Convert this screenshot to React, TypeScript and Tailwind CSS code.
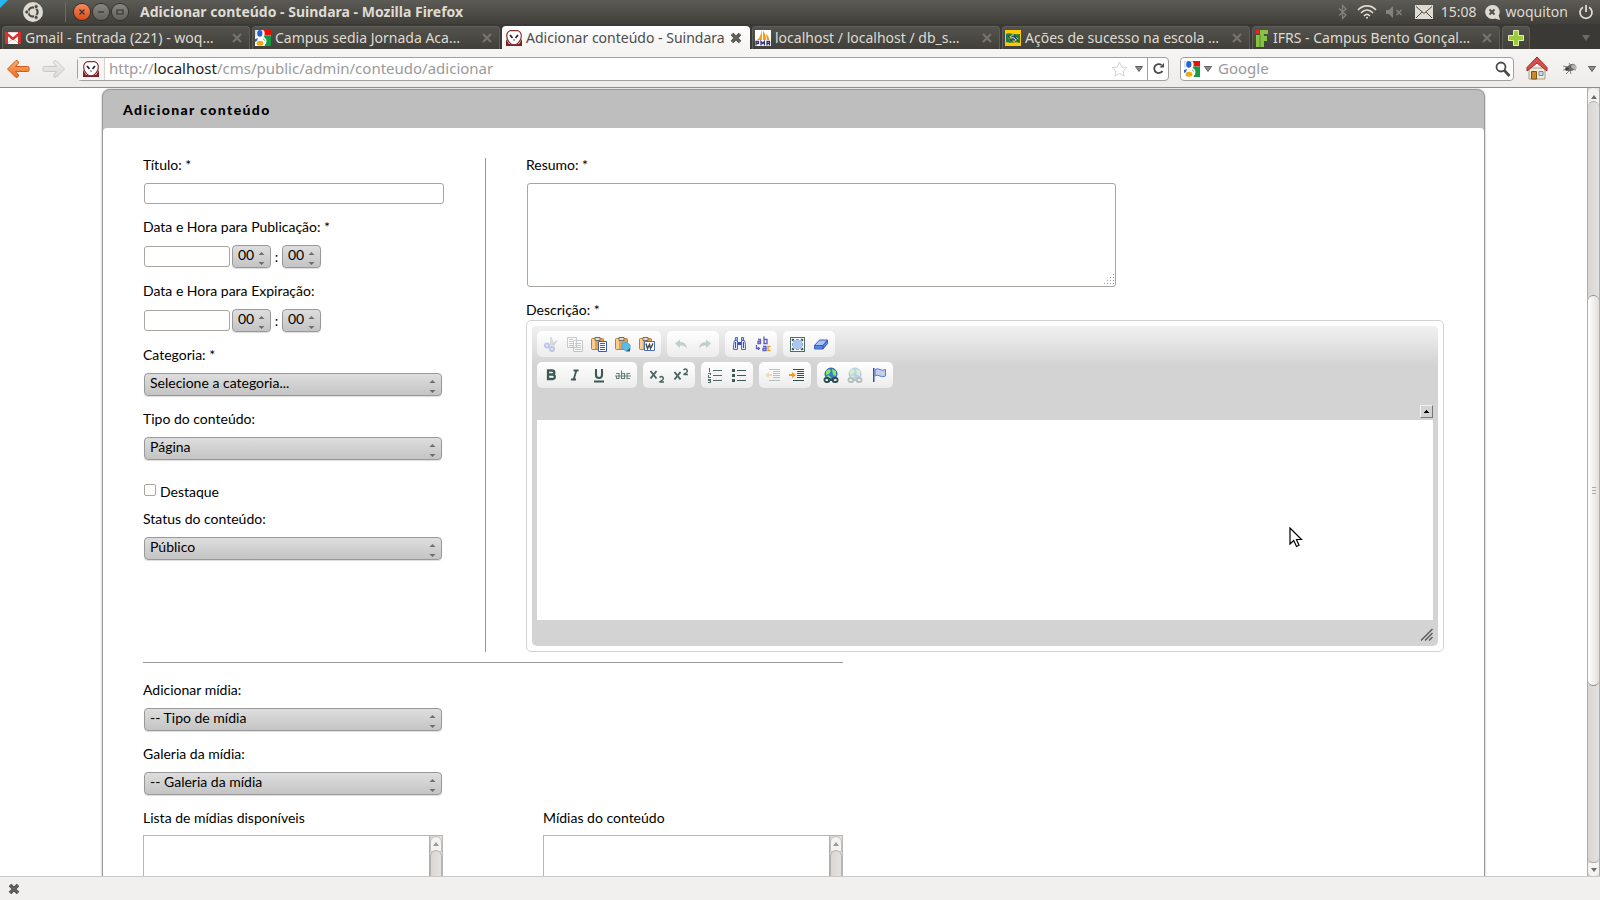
import type { ReactNode } from 'react';
import clsx from 'clsx';

const chromeFont = 'font-[Noto_Sans,sans-serif]';
const pageFont = 'font-[Lato,sans-serif]';

/* ---------- favicons ---------- */

function GmailIcon() {
  return (
    <svg width="16" height="16" viewBox="0 0 16 16" className="shrink-0">
      <rect y="2" width="16" height="12" rx="1" fill="#fff" />
      <path d="M0 2h3v12H0zM13 2h3v12h-3z" fill="#d3342b" />
      <path d="M1 3l7 6 7-6" fill="none" stroke="#d3342b" strokeWidth="2.4" />
      <path d="M3 13l4-4M13 13L9 9" stroke="#e9b3ae" strokeWidth="1" />
      <path d="M3 2.5h10" stroke="#f2d5d2" />
    </svg>
  );
}

function GoogleIcon() {
  return (
    <svg width="16" height="16" viewBox="0 0 16 16" className="shrink-0">
      <rect width="16" height="16" fill="#fff" />
      <path d="M7.500 0H16v5.500H9.500z" fill="#e8120c" />
      <path d="M9 5.500h7V16h-6.500c1.500-3 1-5-1.500-7z" fill="#159a45" />
      <path d="M0 0h2.500C1 1.500 1 4 2 6L0 7z" fill="#cfe0f6" />
      <ellipse cx="4.800" cy="3.400" rx="2.600" ry="3.300" fill="#2a62c9" />
      <path d="M0 9l3-1-1 3-2 1z" fill="#2a62c9" />
      <path d="M8 .5c1.500 2 1.500 4-.5 6.500 3 1.500 4 4 2.500 7" stroke="#fff" strokeWidth="1.400" fill="none" />
      <ellipse cx="5" cy="13.200" rx="3.400" ry="2.500" fill="#f2a90c" />
    </svg>
  );
}

function OwlIcon() {
  return (
    <svg width="16" height="16" viewBox="0 0 16 16" className="shrink-0">
      <rect width="16" height="16" rx="1" fill="#fff" />
      <path d="M0 9v7h16V9l-3 5H3z" fill="#7d2228" />
      <path
        d="M4 .7h8q3.300 1.500 3.300 5c0 4-2.300 7-5 8.800H5.700C3 12.700 .7 9.700 .7 5.700Q.7 2.200 4 .7z"
        fill="#fff"
        stroke="#8d3338"
        strokeWidth="1.200"
      />
      <path d="M4 5l2.500 3M12 5L9.500 8" stroke="#222" strokeWidth="1.700" />
      <path d="M7 9.500h2l-1 1.800z" fill="#333" />
    </svg>
  );
}

function PmaIcon() {
  return (
    <svg width="16" height="16" viewBox="0 0 16 16" className="shrink-0">
      <rect width="16" height="16" fill="#fff" />
      <path d="M7 0v10H2c3-2 4-6 5-10zM8 1c2 2 3 5 3 9H8zM11 4c2 1 3 4 3.500 6H12z" fill="#f89c0e" />
      <path d="M1 15.500v-4h2.500v2H1M6 15.500v-4l1.700 2 1.700-2v4M12 15.500v-4h2.500v4M12 13.500h2.500" fill="none" stroke="#33336b" strokeWidth="1.300" />
    </svg>
  );
}

function BrazilIcon() {
  return (
    <svg width="16" height="16" viewBox="0 0 16 16" className="shrink-0">
      <rect width="16" height="16" fill="#fdca00" />
      <path d="M1 4c3-2 6 1 14 0v9C10 11 6 14 1 12z" fill="#1c7c4c" />
      <path d="M3 8l5-4 5.500 5L9 12z" fill="#d9c52b" />
      <circle cx="8.500" cy="8" r="2.600" fill="#2a4e9a" />
      <path d="M6 8c2-1 4 0 5 2" stroke="#fff" fill="none" strokeWidth=".8" />
      <path d="M9 5l4 6M3 6l4 5" stroke="#113c2a" />
    </svg>
  );
}

function IfrsIcon() {
  return (
    <svg width="14" height="18" viewBox="0 0 14 18" className="shrink-0">
      <path d="M5 1h8v4H9v2h3v5H9v6H1V6h4z" fill="#86c440" />
      <path d="M5 6v12" stroke="#4c4b46" strokeWidth=".6" />
      <circle cx="2.500" cy="2.700" r="2.400" fill="#e8202a" />
    </svg>
  );
}

/* ---------- window chrome ---------- */

function WindowButton({ label, orange, children }: { label: string; orange?: boolean; children: ReactNode }) {
  return (
    <button
      aria-label={label}
      className={clsx(
        'flex h-4 w-4 items-center justify-center rounded-full ring-1 ring-[#33322e]',
        orange ? 'bg-linear-to-b from-[#f7895c] to-[#dd4814]' : 'bg-linear-to-b from-[#8a8881] to-[#62615b]',
      )}
    >
      <svg width="8" height="8" viewBox="0 0 8 8" fill="none" stroke="#33322e" strokeWidth="1.200">
        {children}
      </svg>
    </button>
  );
}

function TitleBar() {
  return (
    <header className="relative flex h-6 shrink-0 items-center bg-linear-to-b from-[#5c5b56] to-[#403f3a] pl-[23px] pr-1.5 text-sm text-[#dfdbd2]">
      <svg width="8" height="8" className="absolute left-0 top-0">
        <path d="M0 0h8L0 8z" fill="#27b8f0" />
      </svg>
      <svg width="20" height="20" viewBox="0 0 20 20">
        <circle cx="10" cy="10" r="10" fill="#dfdbd2" />
        <circle cx="10" cy="10" r="4.600" fill="none" stroke="#4b4a45" strokeWidth="2.200" />
        <g stroke="#dfdbd2" strokeWidth="1.200">
          <path d="M10 10L3 10M10 10l4-7M10 10l4 7" />
        </g>
        <circle cx="10" cy="10" r="3" fill="#dfdbd2" />
        <g fill="#4b4a45" stroke="#dfdbd2" strokeWidth=".8">
          <circle cx="3.800" cy="10" r="2" />
          <circle cx="13.200" cy="4.600" r="2" />
          <circle cx="13.200" cy="15.400" r="2" />
        </g>
      </svg>
      <div className="ml-[22px] h-5 w-px bg-[#6b6a64]" />
      <div className="ml-2 flex gap-[3px]">
        <WindowButton label="Fechar" orange>
          <path d="M1.500 1.500l5 5M6.500 1.500l-5 5" />
        </WindowButton>
        <WindowButton label="Minimizar">
          <path d="M1 4h6" />
        </WindowButton>
        <WindowButton label="Maximizar">
          <path d="M1 2h6v4H1z" />
        </WindowButton>
      </div>
      <h1 className="ml-3 font-bold">Adicionar conteúdo - Suindara - Mozilla Firefox</h1>
      <div className="ml-auto flex items-center">
        <svg width="10" height="16" viewBox="0 0 10 16" fill="none" stroke="#85837c" strokeWidth="1.300">
          <path d="M1 4.500l7 6.500-3.500 3.500V1.500L8 5 1 11.500" />
        </svg>
        <svg width="20" height="16" viewBox="0 0 20 16" fill="none" stroke="#dfdbd2" strokeWidth="1.600" className="ml-[9px]">
          <path d="M1 6c5-5.500 13-5.500 18 0M4 9c3.500-4 8.500-4 12 0M7 12c2-2.200 4-2.200 6 0" />
          <circle cx="10" cy="13.800" r="1" fill="#dfdbd2" stroke="none" />
        </svg>
        <svg width="18" height="16" viewBox="0 0 18 16" className="ml-2">
          <path d="M1 6h3l4-4v12l-4-4H1z" fill="#85837c" />
          <path d="M11.500 6l5 5M16.500 6l-5 5" stroke="#85837c" strokeWidth="1.400" />
        </svg>
        <svg width="18" height="14" viewBox="0 0 18 14" className="ml-3">
          <rect width="18" height="14" fill="#dfdbd2" />
          <path d="M1 1.500l8 7 8-7M1 13l6-6M17 13l-6-6" stroke="#4b4a45" fill="none" />
        </svg>
        <span className="ml-2">15:08</span>
        <svg width="17" height="17" viewBox="0 0 17 17" className="ml-2">
          <path d="M8 1a7 7 0 1 0 3 13.400L16 16l-1.300-4.500A7 7 0 0 0 8 1z" fill="#dfdbd2" />
          <path d="M5.500 5.500l5 5M10.500 5.500l-5 5" stroke="#4b4a45" strokeWidth="1.800" />
        </svg>
        <span className="ml-1">woquiton</span>
        <svg width="16" height="16" viewBox="0 0 16 16" fill="none" stroke="#dfdbd2" strokeWidth="1.800" className="ml-2.5">
          <path d="M5 3.200a6 6 0 1 0 6 0M8 1v7" />
        </svg>
      </div>
    </header>
  );
}

function CloseButton({ label, strong }: { label: string; strong?: boolean }) {
  return (
    <button aria-label={label} className="shrink-0">
      <svg width="12" height="12" viewBox="0 0 12 12" fill="none">
        <path d="M2 2l8 8M10 2l-8 8" stroke={strong ? '#4b4a46' : '#75736c'} strokeWidth={strong ? 3.6 : 2.2} />
        {strong && <path d="M2 2l8 8M10 2l-8 8" stroke="#6c6b66" strokeWidth="1.400" />}
      </svg>
    </button>
  );
}

const tabs = [
  { title: 'Gmail - Entrada (221) - woq…', icon: <GmailIcon /> },
  { title: 'Campus sedia Jornada Aca…', icon: <GoogleIcon /> },
  { title: 'Adicionar conteúdo - Suindara', icon: <OwlIcon />, active: true },
  { title: 'localhost / localhost / db_s…', icon: <PmaIcon /> },
  { title: 'Ações de sucesso na escola …', icon: <BrazilIcon /> },
  { title: 'IFRS - Campus Bento Gonçal…', icon: <IfrsIcon /> },
];

function TabBar() {
  return (
    <nav className="flex h-[25px] shrink-0 items-end gap-0.5 bg-[#3a3935] pl-0.5">
      {tabs.map((tab) => (
        <div
          key={tab.title}
          className={clsx(
            'flex h-[23px] min-w-0 max-w-[248px] flex-1 items-center justify-between rounded-t text-sm',
            tab.active
              ? 'bg-linear-to-b from-white to-[#f4f3f2] pl-1 pr-2 text-[#4c4c4c]'
              : 'border border-b-0 border-[#5f5e58] bg-linear-to-b from-[#53524d] to-[#403f3a] pl-0.5 pr-1.5 text-[#dfdbd2]',
          )}
        >
          <button className="flex min-w-0 items-center gap-1 whitespace-nowrap">
            {tab.icon}
            <span>{tab.title}</span>
          </button>
          <CloseButton label="Fechar aba" strong={tab.active} />
        </div>
      ))}
      <button
        aria-label="Nova aba"
        className="flex h-[23px] w-7 items-center justify-center rounded-t border border-b-0 border-[#5f5e58] bg-linear-to-b from-[#53524d] to-[#403f3a]"
      >
        <svg width="16" height="16" viewBox="0 0 16 16">
          <path d="M5.500 .5h5v5h5v5h-5v5h-5v-5h-5v-5h5z" fill="#9ccb3b" stroke="#e4f3b4" />
        </svg>
      </button>
      <button aria-label="Listar abas" className="mb-2 ml-auto mr-2.5">
        <svg width="8" height="6" viewBox="0 0 8 6">
          <path d="M0 0h8L4 6z" fill="#6b6a64" />
        </svg>
      </button>
    </nav>
  );
}

function DropArrow() {
  return (
    <svg width="8" height="6" viewBox="0 0 8 6" className="shrink-0">
      <path d="M.5 .5h7L4 5.500z" fill="#8f8d89" stroke="#62605c" />
    </svg>
  );
}

function NavArrow({ back }: { back?: boolean }) {
  return (
    <svg width="24" height="20" viewBox="0 0 24 20" className={back ? '' : '-scale-x-100'}>
      <defs>
        <linearGradient id={back ? 'ar' : 'af'} x2="0" y2="1">
          <stop stopColor={back ? '#fbb26a' : '#ececea'} />
          <stop offset="1" stopColor={back ? '#ee6b23' : '#dad9d6'} />
        </linearGradient>
      </defs>
      <path
        d="M1.500 10l8.500-8.500q2.500 0 2.500 2.500L9.500 7.500h12q1.500 0 1.500 1v3q0 1-1.500 1h-12l3 3.500q0 2.500-2.500 2.500z"
        fill={back ? 'url(#ar)' : 'url(#af)'}
        stroke={back ? '#cf5a1c' : '#c9c8c4'}
        strokeLinejoin="round"
      />
    </svg>
  );
}

function NavBar() {
  return (
    <div className="flex h-[39px] shrink-0 items-center border-b border-[#8f8d8a] bg-linear-to-b from-[#f6f5f4] to-[#edecea] pl-1.5 pr-1 pt-px text-[15px]">
      <button aria-label="Voltar">
        <NavArrow back />
      </button>
      <button aria-label="Avançar" className="ml-3">
        <NavArrow />
      </button>
      <div className="ml-[11px] flex h-6 flex-1 items-center rounded border border-[#a3a09c] bg-white">
        <div className="flex h-full w-[27px] items-center justify-center border-r border-[#d5d3d0] bg-[#f6f5f4]">
          <OwlIcon />
        </div>
        <div className="relative flex h-full flex-1 items-center pl-1">
          <input aria-label="Endereço" className="absolute inset-0 bg-transparent outline-none" />
          <span className="text-[#9a9a9a]">
            http://<span className="text-[#1e1e1e]">localhost</span>/cms/public/admin/conteudo/adicionar
          </span>
        </div>
        <button aria-label="Favoritar" className="mr-[7px]">
          <svg width="17" height="16" viewBox="0 0 17 16">
            <path d="M8.500 1l2.200 5 5.300.5-4 3.500 1.200 5.200-4.700-2.800-4.700 2.800L5 10 1 6.500 6.300 6z" fill="#fff" stroke="#d5d3d0" />
          </svg>
        </button>
        <DropArrow />
        <button aria-label="Recarregar" className="ml-1 flex h-full w-[21px] items-center justify-center border-l border-[#a3a09c]">
          <svg width="13" height="13" viewBox="0 0 13 13" fill="none" stroke="#4a4a48" strokeWidth="1.800">
            <path d="M9.500 3a4.500 4.500 0 1 0 1 6" />
            <path d="M7.500 5.500h4.500V1z" fill="#4a4a48" stroke="none" />
          </svg>
        </button>
      </div>
      <div className="ml-[11px] flex h-6 w-[334px] items-center rounded border border-[#a3a09c] bg-white pl-[3px] pr-0.5">
        <GoogleIcon />
        <span className="ml-1">
          <DropArrow />
        </span>
        <input aria-label="Pesquisar" placeholder="Google" className="ml-1.5 min-w-0 flex-1 outline-none placeholder:text-[#9a9a9a]" />
        <svg width="16" height="16" viewBox="0 0 16 16" fill="none" stroke="#4a4a48">
          <circle cx="6" cy="6" r="4.500" strokeWidth="1.800" />
          <path d="M9 9l5.500 6" strokeWidth="2.600" />
        </svg>
      </div>
      <button aria-label="Página inicial" className="ml-3">
        <svg width="22" height="26" viewBox="0 0 22 26">
          <path d="M3 12h16v11H3z" fill="#f1ecd9" stroke="#a39f8d" />
          <path d="M11 1L1 11.500V15l10-8 10 8v-3.500z" fill="#d5504d" stroke="#a32a28" strokeLinejoin="round" />
          <path d="M5.500 15.500h5V23h-5z" fill="#c98b2c" stroke="#7d5414" />
          <path d="M13 15.500h4v4h-4z" fill="#c9dbee" stroke="#75879b" />
        </svg>
      </button>
      <button aria-label="Firebug" className="ml-3.5">
        <svg width="16" height="16" viewBox="0 0 16 16">
          <path d="M1 5l5 1M1 9l4-1M4 13l3-3M9 13l-1-3M7 2l2 3M14 9l-4-1" stroke="#777" strokeWidth=".9" />
          <ellipse cx="9.500" cy="6.500" rx="4.500" ry="3.200" fill="#6b6965" transform="rotate(-25 9.500 6.500)" />
          <ellipse cx="12" cy="6" rx="3" ry="2" fill="#b5b3ae" transform="rotate(30 12 6)" />
          <circle cx="5" cy="8" r="2" fill="#444" />
        </svg>
      </button>
      <span className="ml-2.5 flex">
        <DropArrow />
      </span>
    </div>
  );
}

/* ---------- form pieces ---------- */

function Field({ id, label, children }: { id: string; label: string; children: ReactNode }) {
  return (
    <div>
      <label htmlFor={id} className="mb-2 block leading-5">
        {label}
      </label>
      {children}
    </div>
  );
}

function Select({ id, value, small, label }: { id: string; value: string; small?: boolean; label?: string }) {
  return (
    <div className={clsx('relative h-[23px]', small ? 'w-[39px]' : 'w-[298px]')}>
      <select
        id={id}
        aria-label={label}
        className="block h-full w-full appearance-none rounded-[4px] border border-[#999] bg-linear-to-b from-[#dedede] to-[#c4c4c4] pb-[3px] pl-[5px] leading-[18px] shadow-[0_1px_1px_#ddd] outline-none"
      >
        <option>{value}</option>
      </select>
      <svg width="7" height="13" viewBox="0 0 7 13" className="pointer-events-none absolute right-1.5 top-[7px]">
        <path d="M.5 3L3.500 0l3 3zM.5 10L3.500 13l3-3z" fill="#6e6e6e" />
      </svg>
    </div>
  );
}

function DateTime({ id }: { id: string }) {
  return (
    <div className="flex items-center">
      <input id={id} className="h-[21px] w-[86px] rounded-[3px] border border-[#aaa5a0] bg-white px-1" />
      <span className="ml-0.5">
        <Select id={`${id}-hora`} value="00" small label="Hora" />
      </span>
      <span className="w-[11px] text-center leading-5">:</span>
      <Select id={`${id}-minuto`} value="00" small label="Minuto" />
    </div>
  );
}

function ListBox({ id, label }: { id: string; label: string }) {
  return (
    <div className="w-[300px]">
      <label htmlFor={id} className="mb-[7px] block leading-5">
        {label}
      </label>
      <div className="flex h-[120px] border border-[#b9b7b4]">
        <select id={id} multiple className="min-w-0 flex-1 appearance-none outline-none" />
        <div className="w-[13px] border-l border-[#b0adaa] bg-linear-to-r from-[#d9d5d3] to-[#e4e2e1]">
          <div className="flex h-4 items-center justify-center rounded-t-full border border-[#c3c0bd] bg-[#f4f3f2]">
            <svg width="6" height="4">
              <path d="M0 4l3-4 3 4z" fill="#9b9996" />
            </svg>
          </div>
          <div className="-mt-0.5 h-24 rounded-t-full border border-[#b5b2af] bg-linear-to-r from-[#d9d5d3] to-[#e4e2e1]" />
        </div>
      </div>
    </div>
  );
}

/* ---------- editor toolbar ---------- */

const Clipboard = () => (
  <>
    <rect x=".5" y="2.500" width="12" height="11" rx="1" fill="#e9a04b" stroke="#b9803f" />
    <path d="M1 3h3v10H1z" fill="#f7cf94" />
    <path d="M4 1.500h5v3H4z" fill="#ddd" stroke="#7b6a55" />
  </>
);

const Lines = ({ ys, x, w }: { ys: number[]; x: number; w: number }) => (
  <>
    {ys.map((y) => (
      <rect key={y} x={x} y={y} width={w} height="1" />
    ))}
  </>
);

const Globe = () => (
  <>
    <circle cx="8" cy="7" r="6" fill="#3d78cc" stroke="#2f62b3" />
    <path d="M3 4l3-2 2 2-2 3-3 1zM9 2l4 2v5l-3-1z" fill="#7fee5c" />
    <path d="M5 8l3 2-2 2-2-2z" fill="#7fee5c" />
    <g fill="none" stroke="#2f4f4c" strokeWidth="1.800">
      <rect x="1.400" y="11" width="5" height="4" rx="2" />
      <rect x="9.600" y="11" width="5" height="4" rx="2" />
      <path d="M5 13h6" />
    </g>
  </>
);

type Tool = { name: string; icon: ReactNode; off?: boolean };

const rows: Tool[][][] = [
  [
    [
      {
        name: 'Recortar',
        off: true,
        icon: (
          <>
            <path d="M7.500 9L8 1l2.500 7M8 9.500l6-5L10.500 10" fill="#9aa0ab" stroke="#7f8790" />
            <g fill="none" stroke="#4b62cf" strokeWidth="2.200">
              <circle cx="4" cy="9.500" r="2" />
              <circle cx="9" cy="13" r="2" />
            </g>
          </>
        ),
      },
      {
        name: 'Copiar',
        off: true,
        icon: (
          <>
            <path d="M.5 1.500h9v10h-9zM6.500 4.500h9v11h-9z" fill="#fff" stroke="#526a68" />
            <g fill="#526a68">
              <Lines ys={[3, 5, 7, 9]} x={2} w={4} />
              <Lines ys={[7, 9, 11, 13]} x={8} w={6} />
            </g>
          </>
        ),
      },
      {
        name: 'Colar',
        icon: (
          <>
            <Clipboard />
            <path d="M7.500 5.500h8v10h-8z" fill="#fff" stroke="#4059b8" />
            <g fill="#4059b8">
              <Lines ys={[7, 9, 11, 13]} x={9} w={5} />
            </g>
          </>
        ),
      },
      {
        name: 'Colar como texto',
        icon: (
          <>
            <Clipboard />
            <path d="M7 7l5-1 3 3v5l-4 1-4-3z" fill="#58bce8" stroke="#5aa6d6" />
            <path d="M11 15.500h4V12z" fill="#4b5a68" />
          </>
        ),
      },
      {
        name: 'Colar do Word',
        icon: (
          <>
            <Clipboard />
            <path d="M5.500 5.500h10v9h-10z" fill="#fff" stroke="#4a70b8" />
            <path d="M7 7.500l1.500 5 2-4 1 4 2.500-5" fill="none" stroke="#4a4a4a" strokeWidth="1.400" />
          </>
        ),
      },
    ],
    [
      {
        name: 'Desfazer',
        off: true,
        icon: <path d="M2 7.500l5-4v2.500c5 0 7 3 6.500 7-1-3-3-3.500-6.500-3.500V12z" fill="#4b7470" />,
      },
      {
        name: 'Refazer',
        off: true,
        icon: <path d="M14 7.500l-5-4v2.500c-5 0-7 3-6.500 7 1-3 3-3.500 6.500-3.500V12z" fill="#4b7470" />,
      },
    ],
    [
      {
        name: 'Localizar',
        icon: (
          <>
            <path d="M4.500 1.500h2v3h-2zM10.500 1.500h2v3h-2z" fill="#aac4f0" stroke="#5a66c4" />
            <path d="M3.500 4.500h3v9h-4v-5zM10.500 4.500h3l1 4v5h-4z" fill="#dbe5fa" stroke="#5a66c4" />
            <path d="M7 6h3v3H7zM4 6h1v6H4zM12 6h1v6h-1z" fill="#3f49b0" />
          </>
        ),
      },
      {
        name: 'Substituir',
        icon: (
          <>
            <g fill="none" strokeWidth="1.300" stroke="#5d60bd">
              <path d="M3 3.500h2.500v4H3v-2h2.500M9 .5v7h3v-4H9M8 10.500h3v4H8v-2h3" />
              <path d="M1.500 9v3.500H5M3.500 11v3" />
            </g>
            <path d="M15.500 10.500H13v4h2.500" fill="none" stroke="#f0a02a" strokeWidth="1.400" />
          </>
        ),
      },
    ],
    [
      {
        name: 'Selecionar tudo',
        icon: (
          <>
            <rect x="1.500" y="1.500" width="14" height="14" fill="#fff" stroke="#526a68" />
            <rect x="4" y="4" width="9" height="9" fill="#a9c8f0" />
            <path d="M3 3h2v1H4v1H3zM12 3h2v2h-1V4h-1zM3 12h1v1h1v1H3zM14 12v2h-2v-1h1v-1z" fill="#3d5a57" stroke="#3d5a57" strokeWidth=".4" />
            <path d="M7 3.500h3M7 13.500h3M3.500 7v3M13.500 7v3" stroke="#8aa7c8" />
          </>
        ),
      },
      {
        name: 'Remover formatação',
        icon: (
          <>
            <path d="M1.500 9.500l5-5.500h8L10 9.500z" fill="#a8c3f5" stroke="#3b5fc0" />
            <path d="M1.500 9.500H10V13H1.500zM10 9.500L14.500 4v3.500L10 13z" fill="#5c86dd" stroke="#3b5fc0" />
          </>
        ),
      },
    ],
  ],
  [
    [
      {
        name: 'Negrito',
        icon: (
          <path
            d="M5 3.500h4q2.300 0 2.300 2T9 7.500H5zM5 7.500h4.500q2.300 0 2.300 2.300T9.500 12H5zM5 3v9.500"
            fill="none"
            stroke="#3d5a57"
            strokeWidth="2.300"
          />
        ),
      },
      { name: 'Itálico', icon: <path d="M6.500 3.500h5M4 12.500h5M9.500 3L6.500 13" stroke="#3d5a57" strokeWidth="1.800" /> },
      { name: 'Sublinhado', icon: <path d="M5 2v6q0 3 3 3t3-3V2M3 14.500h10" fill="none" stroke="#3d5a57" strokeWidth="2.100" /> },
      {
        name: 'Tachado',
        icon: (
          <path
            d="M1 6.500h3v5H1.500V9H4M6.500 3.500v8h3v-5h-3M15 6.500h-3v5h3M0 9h16"
            fill="none"
            stroke="#6a807e"
            strokeWidth="1.100"
          />
        ),
      },
    ],
    [
      {
        name: 'Subscrito',
        icon: (
          <>
            <path d="M1.500 4l6 7.500M7.500 4l-6 7.500" stroke="#4a6663" strokeWidth="2" />
            <path d="M10.500 10.500q2-2 3.500 0t-3.500 4.500H15" fill="none" stroke="#4a6663" strokeWidth="1.500" />
          </>
        ),
      },
      {
        name: 'Sobrescrito',
        icon: (
          <>
            <path d="M1.500 5l6 7.500M7.500 5l-6 7.500" stroke="#4a6663" strokeWidth="2" />
            <path d="M10.500 3q2-2 3.500 0t-3.500 4.500H15" fill="none" stroke="#4a6663" strokeWidth="1.500" />
          </>
        ),
      },
    ],
    [
      {
        name: 'Lista numerada',
        icon: (
          <g fill="#526a68">
            <Lines ys={[3, 8, 13]} x={6} w={9} />
            <path d="M2 1h1v4H2zM1 6h3v2H2v2h2v1H1V8h2V7H1zM1 12h3v4H1v-1h2v-1H1z" />
          </g>
        ),
      },
      {
        name: 'Lista',
        icon: (
          <g fill="#3d5a57">
            <Lines ys={[3, 8, 13]} x={6} w={9} />
            <path d="M1 2h3v3H1zM1 7h3v3H1zM1 12h3v3H1z" />
          </g>
        ),
      },
    ],
    [
      {
        name: 'Diminuir recuo',
        off: true,
        icon: (
          <>
            <g fill="#2f4f4c">
              <Lines ys={[2, 13]} x={4} w={11} />
              <Lines ys={[4, 6, 8, 10]} x={8} w={7} />
            </g>
            <path d="M0 8l4-3v2h3v2H4v2z" fill="#f09a2a" />
          </>
        ),
      },
      {
        name: 'Aumentar recuo',
        icon: (
          <>
            <g fill="#2f4f4c">
              <Lines ys={[2, 13]} x={4} w={11} />
              <Lines ys={[4, 6, 8, 10]} x={8} w={7} />
            </g>
            <path d="M7 8L3 5v2H0v2h3v2z" fill="#f09a2a" />
          </>
        ),
      },
    ],
    [
      { name: 'Inserir link', icon: <Globe /> },
      { name: 'Remover link', off: true, icon: <Globe /> },
      {
        name: 'Âncora',
        icon: (
          <>
            <path d="M2 1h1.500v14H2z" fill="#3f49c0" />
            <path d="M4 2.500q3-1.500 5 0t5.500 0V9q-3 1.500-5.500 0t-5 0z" fill="#c4cfe6" stroke="#4b7fe0" />
          </>
        ),
      },
    ],
  ],
];

function Editor() {
  return (
    <div className="rounded-[5px] border border-[#d3d3d3] p-[5px]">
      <div className="rounded-[5px] bg-[#d3d3d3] px-[5px]">
        <div className="-mx-[5px] flex rounded-t-[5px] bg-linear-to-b from-[#f1f1f1] to-[#d3d3d3] to-[40px] p-[5px] pb-0.5">
          <div className="flex flex-1 flex-col gap-[5px] pb-[30px]">
            {rows.map((groups, r) => (
              <div key={r} className="flex flex-wrap gap-1.5">
                {groups.map((group) => (
                  <div key={group[0].name} className="flex h-[26px] rounded-[5px] bg-linear-to-b from-white to-[#ececec] px-0.5">
                    {group.map((tool) => (
                      <button key={tool.name} aria-label={tool.name} className="flex w-6 items-center justify-center">
                        <svg width="16" height="16" viewBox="0 0 16 16" className={tool.off ? 'opacity-30' : ''}>
                          {tool.icon}
                        </svg>
                      </button>
                    ))}
                  </div>
                ))}
              </div>
            ))}
          </div>
          <button
            aria-label="Recolher barra"
            className="flex h-[13px] w-[13px] items-center justify-center self-end border border-b-[#777] border-l-[#f1f1f1] border-r-[#777] border-t-[#f1f1f1]"
          >
            <svg width="5" height="3">
              <path d="M0 3V2h1V1h1V0h1v1h1v1h1v1z" fill="#000" />
            </svg>
          </button>
        </div>
        <textarea id="descricao" className="block h-[200px] w-full resize-none bg-white p-2 outline-none" />
        <div className="flex h-[26px] items-center justify-end pt-0.5">
          <svg width="13" height="13" viewBox="0 0 13 13" stroke="#555" strokeWidth="1.300">
            <path d="M1 12.500L12.500 1M5 12.500l7.500-7.500M9 12.500l3.500-3.500" />
          </svg>
        </div>
      </div>
    </div>
  );
}

/* ---------- page ---------- */

function PageScrollbar() {
  return (
    <div className="flex w-[13px] shrink-0 flex-col border-x border-[#b0adaa] bg-linear-to-r from-[#d9d5d3] to-[#e4e2e1]">
      <div className="flex h-[17px] items-center justify-center rounded-t-full bg-[#f4f3f2]">
        <svg width="6" height="4">
          <path d="M0 4l3-4 3 4z" fill="#6e6e6e" />
        </svg>
      </div>
      <div className="-mt-1 flex-[194] rounded-t-full border-t border-[#a9a6a3] bg-linear-to-r from-[#d9d5d3] to-[#e4e2e1]" />
      <div className="flex flex-[392] flex-col items-center justify-center gap-0.5 rounded-full border-y border-[#8f8d8a] bg-linear-to-r from-white to-[#e2e0de]">
        <div className="h-px w-1 bg-[#aaa]" />
        <div className="h-px w-1 bg-[#aaa]" />
        <div className="h-px w-1 bg-[#aaa]" />
      </div>
      <div className="flex-[177] rounded-b-full border-b border-[#a9a6a3]" />
      <div className="flex h-[13px] items-center justify-center rounded-b-full bg-[#f4f3f2]">
        <svg width="6" height="4">
          <path d="M0 0l3 4 3-4z" fill="#6e6e6e" />
        </svg>
      </div>
    </div>
  );
}

function ContentForm() {
  return (
    <form className="px-10 pt-[27px]">
      <div className="flex">
        <div className="mt-[3px] flex w-[343px] shrink-0 flex-col border-r border-[#999]">
          <div className="-mt-[3px] flex flex-col gap-[13px]">
            <Field id="titulo" label="Título: *">
              <input id="titulo" className="ml-px block h-[21px] w-[300px] rounded-[3px] border border-[#aaa5a0] bg-white px-1" />
            </Field>
            <Field id="publicacao" label="Data e Hora para Publicação: *">
              <div className="ml-px">
                <DateTime id="publicacao" />
              </div>
            </Field>
            <Field id="expiracao" label="Data e Hora para Expiração:">
              <div className="ml-px">
                <DateTime id="expiracao" />
              </div>
            </Field>
            <Field id="categoria" label="Categoria: *">
              <div className="ml-px">
                <Select id="categoria" value="Selecione a categoria..." />
              </div>
            </Field>
            <Field id="tipo" label="Tipo do conteúdo:">
              <div className="ml-px">
                <Select id="tipo" value="Página" />
              </div>
            </Field>
          </div>
          <div className="ml-px mt-[22px] flex gap-1 leading-5">
            <input id="destaque" type="checkbox" className="mt-0.5 h-3 w-3 appearance-none rounded-xs border border-[#aaa5a0] bg-white" />
            <label htmlFor="destaque">Destaque</label>
          </div>
          <div className="mt-[7px]">
            <Field id="status" label="Status do conteúdo:">
              <div className="ml-px">
                <Select id="status" value="Público" />
              </div>
            </Field>
          </div>
        </div>
        <div className="ml-10 min-w-0 flex-1">
          <Field id="resumo" label="Resumo: *">
            <div className="relative ml-px w-[589px] max-w-full">
              <textarea id="resumo" className="block h-[104px] w-full resize-none rounded-[3px] border border-[#aaa5a0] bg-white p-1" />
              <svg width="11" height="11" viewBox="0 0 11 11" fill="#999" className="pointer-events-none absolute bottom-0.5 right-px">
                <path d="M9 0h1v1H9zM6 3h1v1H6zM9 3h1v1H9zM3 6h1v1H3zM6 6h1v1H6zM9 6h1v1H9zM0 9h1v1H0zM3 9h1v1H3zM6 9h1v1H6zM9 9h1v1H9z" />
              </svg>
            </div>
          </Field>
          <label htmlFor="descricao" className="mt-[13px] block leading-5">
            Descrição: *
          </label>
          <Editor />
        </div>
      </div>
      <div className="mt-2.5 w-[700px] border-t border-[#999] pt-[17px]">
        <div className="flex flex-col gap-[13px]">
          <Field id="midia" label="Adicionar mídia:">
            <div className="ml-px">
              <Select id="midia" value="-- Tipo de mídia" />
            </div>
          </Field>
          <Field id="galeria" label="Galeria da mídia:">
            <div className="ml-px">
              <Select id="galeria" value="-- Galeria da mídia" />
            </div>
          </Field>
          <div className="flex justify-between">
            <ListBox id="disponiveis" label="Lista de mídias disponíveis" />
            <ListBox id="do-conteudo" label="Mídias do conteúdo" />
          </div>
        </div>
      </div>
    </form>
  );
}

function Cursor() {
  return (
    <svg width="14" height="21" viewBox="0 0 14 21" className="absolute left-[1289px] top-[527px]">
      <path d="M1 1v16l3.700-3.500L7.500 19.500l2.500-1.200L7.500 12.500h5z" fill="#fff" stroke="#000" strokeWidth="1.200" />
    </svg>
  );
}

export default function App() {
  return (
    <div className={clsx('relative flex h-screen flex-col overflow-hidden bg-white', chromeFont)}>
      <TitleBar />
      <TabBar />
      <NavBar />
      <div className="flex min-h-0 flex-1">
        <main className={clsx('min-w-0 flex-1 overflow-hidden px-[102px] pt-px text-sm text-black', pageFont)}>
          <section className="min-h-full rounded-t-[8px] border border-[#999] bg-[#bebebe] shadow-[0_0_2px_#999]">
            <h2 className="h-[38px] pl-5 font-black leading-10 tracking-widest">Adicionar conteúdo</h2>
            <div className="rounded-t bg-white pb-10">
              <ContentForm />
            </div>
          </section>
        </main>
        <PageScrollbar />
      </div>
      <footer className="flex h-6 shrink-0 items-center border-t border-[#cbc9c7] bg-[#f1f0ee] pl-2">
        <CloseButton label="Fechar barra" strong />
      </footer>
      <Cursor />
    </div>
  );
}
